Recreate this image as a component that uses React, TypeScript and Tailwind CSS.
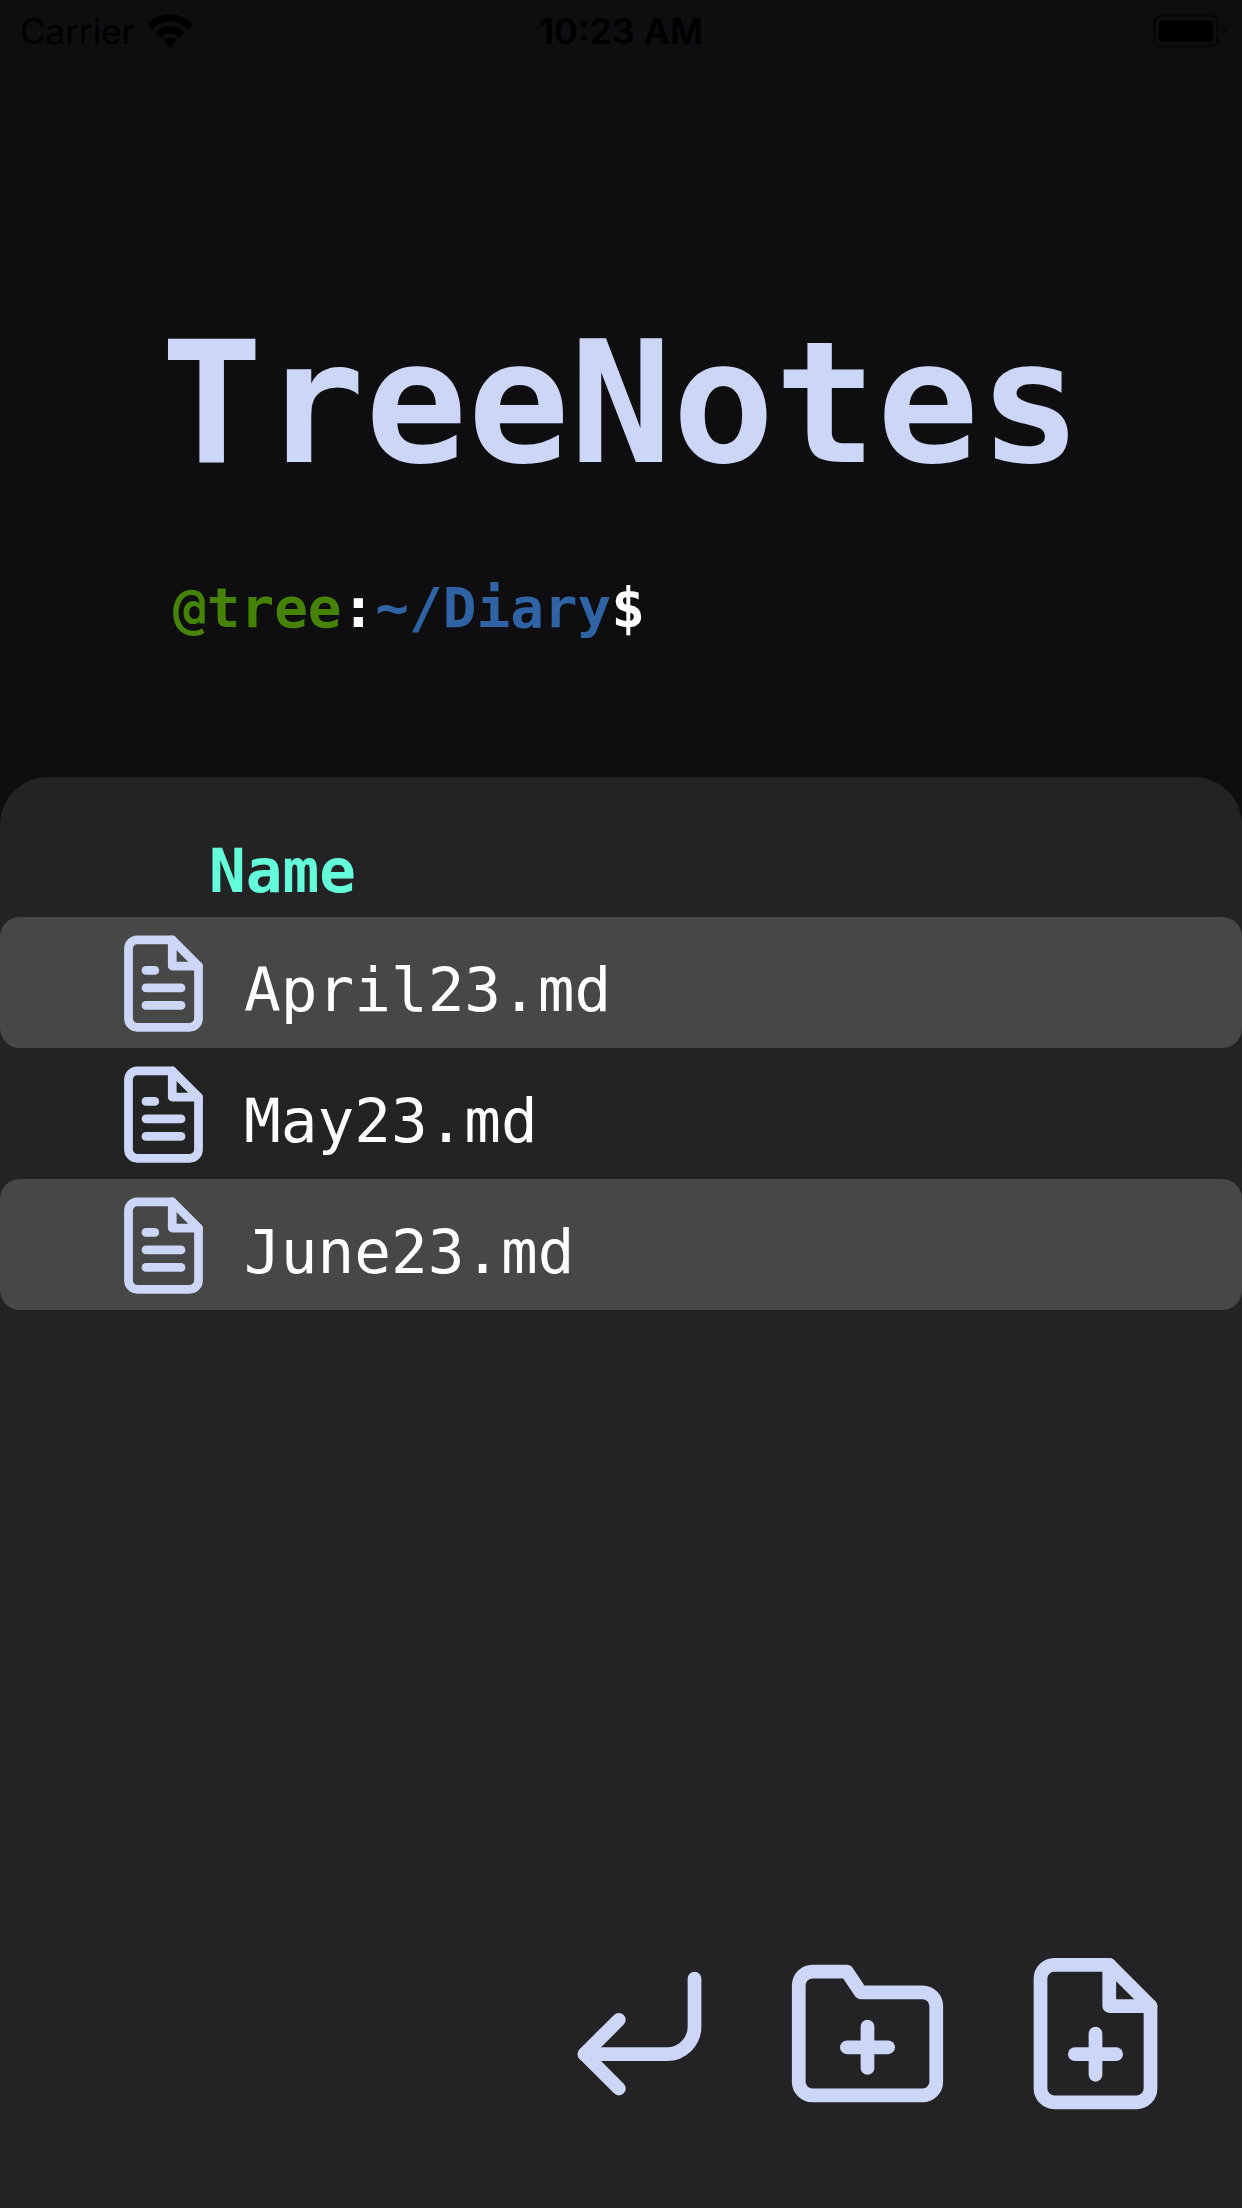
import { FiCornerDownLeft, FiFilePlus, FiFileText, FiFolderPlus } from "react-icons/fi";

const files = ["April23.md", "May23.md", "June23.md"];

const actions = [
  { label: "Go back", Icon: FiCornerDownLeft },
  { label: "New folder", Icon: FiFolderPlus },
  { label: "New note", Icon: FiFilePlus },
];

function WifiIcon() {
  return (
    <svg viewBox="0 0 46 34" className="h-[34px] w-[46px]" fill="currentColor" aria-hidden="true">
      <path d="M0.5 10.2C6.6 3.8 14.5 0.3 23 0.3S39.4 3.8 45.5 10.2L40.6 15.2C35.8 10.3 29.6 7.5 23 7.5S10.2 10.3 5.4 15.2Z" />
      <path d="M8.6 18.4C12.4 14.4 17.5 12.1 23 12.1S33.6 14.4 37.4 18.4L32.4 23.4C29.9 20.8 26.6 19.3 23 19.3S16.1 20.8 13.6 23.4Z" />
      <path d="M16.6 26.5C18.2 24.8 20.5 23.8 23 23.8S27.8 24.8 29.4 26.5L23 33.4Z" />
    </svg>
  );
}

function BatteryIcon() {
  return (
    <svg viewBox="0 0 73 34" className="h-[34px] w-[73px]" aria-hidden="true">
      <rect x="1.5" y="1.5" width="63" height="31" rx="8" fill="none" stroke="#08080a" strokeWidth="3" />
      <rect x="6" y="6" width="54" height="22" rx="4" fill="#000" />
      <path d="M69 11.5c2.4 1 3.8 3 3.8 5.5s-1.4 4.5-3.8 5.500z" fill="#08080a" />
    </svg>
  );
}

function StatusBar() {
  return (
    <div className="grid grid-cols-3 items-center px-4 pt-0.5 font-['Inter',sans-serif] text-[35px] leading-[58px] text-black">
      <div className="flex items-center gap-3 pl-1">
        <span>Carrier</span>
        <WifiIcon />
      </div>
      <span className="text-center text-[36px] font-semibold">10:23 AM</span>
      <div className="flex justify-end">
        <BatteryIcon />
      </div>
    </div>
  );
}

export default function App() {
  return (
    <div className="flex min-h-screen flex-col bg-[#0e0e10] font-['DejaVu_Sans_Mono',monospace] text-white">
      <StatusBar />
      <header className="pt-[243px] pb-[137px]">
        <h1 className="text-center text-[170px] leading-[200px] font-bold text-[#ccd6f6]">TreeNotes</h1>
        <p className="mt-[73px] pl-[173px] text-[56px] leading-[64px] font-bold">
          <span className="text-[#468206]">@tree</span>
          <span>:</span>
          <span className="text-[#3063a3]">~/Diary</span>
          <span>$</span>
        </p>
      </header>
      <main className="flex flex-1 flex-col rounded-t-[48px] bg-[#232325] pt-[58px]">
        <h2 className="mb-[10px] pl-[209px] text-[61px] leading-[72px] font-bold text-[#64ffda]">Name</h2>
        <ul>
          {files.map((name) => (
            <li key={name} className="rounded-[20px] odd:bg-[#474747] even:bg-[#232323]">
              <button
                type="button"
                className="flex w-full items-center gap-7 pt-[14px] pb-3 pl-[111px] text-left text-[61px] leading-[72px]"
              >
                <FiFileText className="size-[105px] shrink-0 text-[#ccd6f6]" aria-hidden="true" />
                <span className="pt-3">{name}</span>
              </button>
            </li>
          ))}
        </ul>
        <nav aria-label="Actions" className="mt-auto flex justify-end gap-[63px] pr-16 pb-[92px] text-[#ccd6f6]">
          {actions.map(({ label, Icon }) => (
            <button key={label} type="button" aria-label={label}>
              <Icon className="size-[165px]" aria-hidden="true" />
            </button>
          ))}
        </nav>
      </main>
    </div>
  );
}
